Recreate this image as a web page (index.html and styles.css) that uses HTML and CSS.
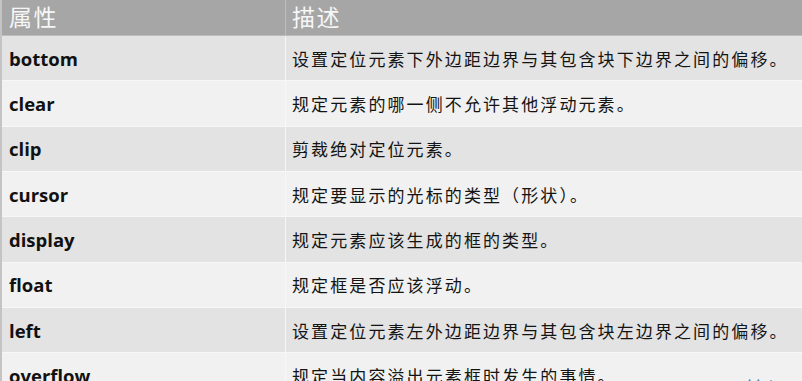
FILE: index.html
```html
<!DOCTYPE html>
<html lang="zh-CN">
<head>
<meta charset="utf-8">
<link rel="stylesheet" href="styles.css">
</head>
<body>
<div class="page">
  <div class="table">
    <div class="row head">
      <div class="cell c1">属性</div>
      <div class="cell c2">描述</div>
    </div>
    <div class="row dark">
      <div class="cell c1">bottom</div>
      <div class="cell c2">设置定位元素下外边距边界与其包含块下边界之间的偏移。</div>
    </div>
    <div class="row light">
      <div class="cell c1">clear</div>
      <div class="cell c2">规定元素的哪一侧不允许其他浮动元素。</div>
    </div>
    <div class="row dark">
      <div class="cell c1">clip</div>
      <div class="cell c2">剪裁绝对定位元素。</div>
    </div>
    <div class="row light">
      <div class="cell c1">cursor</div>
      <div class="cell c2">规定要显示的光标的类型（形状）。</div>
    </div>
    <div class="row dark">
      <div class="cell c1">display</div>
      <div class="cell c2">规定元素应该生成的框的类型。</div>
    </div>
    <div class="row light">
      <div class="cell c1">float</div>
      <div class="cell c2">规定框是否应该浮动。</div>
    </div>
    <div class="row dark">
      <div class="cell c1">left</div>
      <div class="cell c2">设置定位元素左外边距边界与其包含块左边界之间的偏移。</div>
    </div>
    <div class="row light">
      <div class="cell c1">overflow</div>
      <div class="cell c2">规定当内容溢出元素框时发生的事情。</div>
    </div>
  </div>
  <div class="float-link">笔记</div>
</div>
</body>
</html>
```
FILE: styles.css
```css
html, body {
  margin: 0;
  padding: 0;
  background: #f1f1f1;
}
.page {
  position: relative;
  width: 802px;
  height: 381px;
  overflow: hidden;
}
.table {
  display: flex;
  flex-direction: column;
  border-left: 2px solid #c4c4c4;
  width: 820px;
}
.row {
  display: grid;
  grid-template-columns: 284px 1fr;
  height: 45.33px;
  box-sizing: border-box;
  border-bottom: 1px solid #f7f7f7;
}
.row.head {
  height: 36px;
  background: #a6a6a6;
  border-bottom: 1px solid #bdbdbd;
}
.row.dark { background: #e3e3e3; }
.row.light { background: #f1f1f1; }
.cell {
  display: flex;
  align-items: center;
}
.c1 {
  padding-left: 7px;
  border-right: 1px solid #f7f7f7;
  font-family: "Open Sans", "Noto Sans", sans-serif;
  font-weight: 700;
  font-size: 18.5px;
  color: #111111;
}
.c2 {
  padding-left: 6px;
  font-family: "Noto Sans CJK SC", sans-serif;
  font-size: 17px;
  letter-spacing: 2.1px;
  color: #141414;
}
.head .cell {
  align-items: flex-start;
  padding-top: 1px;
  font-family: "Noto Sans CJK SC", sans-serif;
  font-weight: 400;
  font-size: 23px;
  letter-spacing: 1.5px;
  line-height: 30px;
  color: #f6f6f6;
}
.head .c1 {
  border-right: 1px solid #bdbdbd;
}
.float-link {
  position: absolute;
  left: 745px;
  top: 376.5px;
  font-family: "Noto Sans CJK SC", sans-serif;
  font-size: 22px;
  line-height: 22px;
  color: #4a8ac4;
}
```
